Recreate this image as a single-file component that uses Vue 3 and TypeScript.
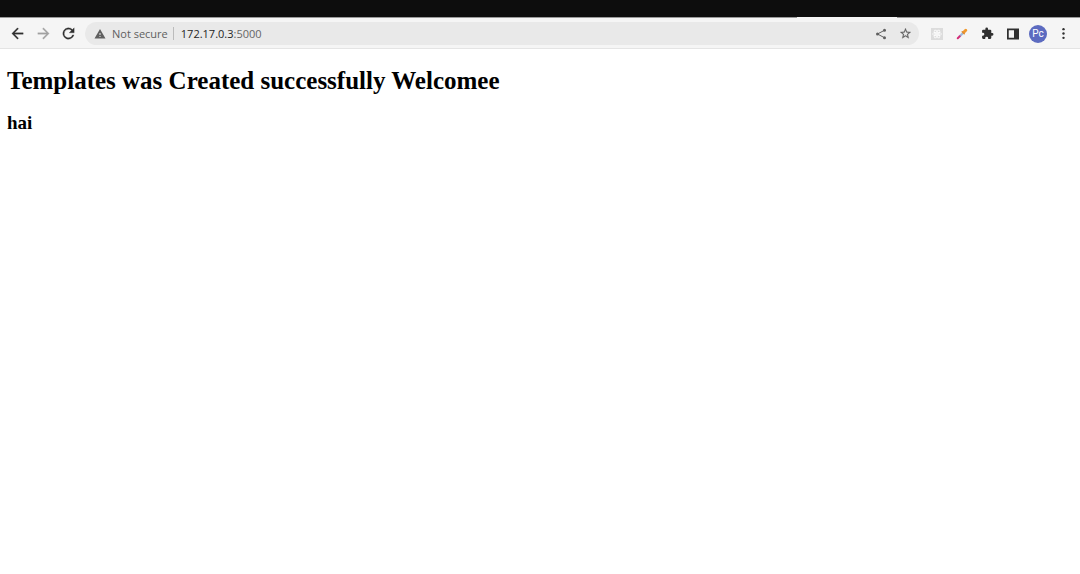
<script setup lang="ts">
import { ref } from 'vue'

const host = '172.17.0.3'
const port = ':5000'
const address = ref(host + port)
const editing = ref(false)
</script>

<template>
  <div class="browser">
    <div class="titlebar"><div class="active-tab"></div></div>
    <header class="toolbar">
      <nav class="group navigation" aria-label="Navigation">
        <button type="button" aria-label="Back">
          <svg class="icon bold" viewBox="0 0 24 24"><path d="M20 11H7.8l5.6-5.6L12 4l-8 8 8 8 1.4-1.4L7.8 13H20z" /></svg>
        </button>
        <button type="button" class="muted" aria-label="Forward">
          <svg class="icon bold" viewBox="0 0 24 24"><path d="M12 4l-1.4 1.4 5.6 5.6H4v2h12.2l-5.6 5.6L12 20l8-8z" /></svg>
        </button>
        <button type="button" aria-label="Reload">
          <svg class="icon bold" viewBox="0 0 24 24"><path d="M17.65 6.35A8 8 0 1 0 19.73 14h-2.08A6 6 0 1 1 12 6c1.66 0 3.14.69 4.22 1.78L13 11h7V4z" /></svg>
        </button>
      </nav>

      <div class="omnibox">
        <button type="button" class="security">
          <svg class="small" viewBox="0 0 24 24"><path fill-rule="evenodd" d="M1 21h22L12 2zm10-3h2v-2h-2zm0-4h2v-4h-2z" /></svg>
          <span>Not secure</span>
        </button>
        <span class="divider"></span>
        <div class="address">
          <input
            v-model="address"
            :class="{ editing }"
            type="text"
            aria-label="Address"
            spellcheck="false"
            @focus="editing = true"
            @blur="editing = false"
          />
          <span v-if="!editing && address === host + port" class="formatted" aria-hidden="true">{{ host }}<span class="port">{{ port }}</span></span>
        </div>
        <button type="button" class="page-action" aria-label="Share">
          <svg class="small" viewBox="0 0 24 24"><path d="M19 4.5 5 12l14 7.5" fill="none" stroke="currentColor" stroke-width="2" /><circle cx="19" cy="4.5" r="3" /><circle cx="5" cy="12" r="3" /><circle cx="19" cy="19.5" r="3" /></svg>
        </button>
        <button type="button" class="page-action" aria-label="Bookmark">
          <svg class="medium bold" viewBox="0 0 24 24"><path d="M22 9.24l-7.19-.62L12 2 9.19 8.63 2 9.24l5.46 4.73L5.82 21 12 17.27 18.18 21l-1.63-7.03zM12 15.4l-3.76 2.27 1-4.28-3.32-2.88 4.38-.38L12 6.1l1.71 4.04 4.38.38-3.32 2.88 1 4.28z" /></svg>
        </button>
      </div>

      <div class="group extensions">
        <button type="button" aria-label="React Developer Tools">
          <svg class="small" viewBox="0 0 24 24">
            <path fill="#dcdcdc" d="M0 0h24v24H0z" />
            <g fill="none" stroke="#fff" stroke-width="1.4">
              <ellipse cx="12" cy="12" rx="9" ry="3.5" />
              <ellipse cx="12" cy="12" rx="9" ry="3.5" transform="rotate(60 12 12)" />
              <ellipse cx="12" cy="12" rx="9" ry="3.5" transform="rotate(120 12 12)" />
            </g>
            <circle cx="12" cy="12" r="2" fill="#fff" />
          </svg>
        </button>
        <button type="button" aria-label="Color picker">
          <svg class="small" viewBox="0 0 24 24">
            <path d="M7 17l7-7" stroke="#9bb8dc" stroke-width="4.5" />
            <path d="M3.5 20.5l4-4" stroke="#d32a76" stroke-width="4" stroke-linecap="round" />
            <path d="M15.5 8.5l4-4" stroke="#f0982c" stroke-width="6" stroke-linecap="round" />
            <path d="M12.5 7.5l4 4" stroke="#dd8b35" stroke-width="3" stroke-linecap="round" />
          </svg>
        </button>
        <button type="button" aria-label="Extensions">
          <svg class="medium" viewBox="0 0 24 24"><path d="M20.5 11H19V7a2 2 0 0 0-2-2h-4V3.5a2.5 2.5 0 0 0-5 0V5H4a2 2 0 0 0-2 2v3.8h1.5a2.7 2.7 0 0 1 0 5.4H2V20a2 2 0 0 0 2 2h3.8v-1.5a2.7 2.7 0 0 1 5.4 0V22H17a2 2 0 0 0 2-2v-4h1.5a2.5 2.5 0 0 0 0-5z" /></svg>
        </button>
        <button type="button" aria-label="Side panel">
          <svg class="small" viewBox="0 0 24 24"><path fill-rule="evenodd" d="M0 1h24v22H0zm3.5 3.5v15H14v-15z" /></svg>
        </button>
        <button type="button" aria-label="Profile"><span class="avatar">Pc</span></button>
        <button type="button" aria-label="Menu">
          <svg class="medium" viewBox="0 0 24 24"><circle cx="12" cy="4" r="2.2" /><circle cx="12" cy="12" r="2.2" /><circle cx="12" cy="20" r="2.2" /></svg>
        </button>
      </div>
    </header>

    <main class="page">
      <h1>Templates was Created successfully Welcomee</h1>
      <h3>hai</h3>
    </main>
  </div>
</template>

<style>
body {
  margin: 0;
  background: #fff;
}
</style>

<style scoped>
.browser {
  min-height: 100vh;
  background: #fff;
}

.titlebar {
  display: flex;
  align-items: flex-end;
  justify-content: flex-end;
  box-sizing: border-box;
  height: 18px;
  padding-right: 183px;
  background: linear-gradient(#0d0d0d 17px, #999 17px);
}

.active-tab {
  width: 100px;
  height: 1px;
  background: #f5f5f5;
}

.toolbar {
  display: flex;
  align-items: center;
  box-sizing: border-box;
  height: 31px;
  padding: 1px 4px 0 5px;
  border-bottom: 1px solid #e4e4e4;
  background: #f5f5f5;
  font-family: "Open Sans", "Noto Sans", sans-serif;
  font-size: 11px;
}

button {
  display: flex;
  align-items: center;
  justify-content: center;
  flex: none;
  width: 25px;
  height: 23px;
  padding: 0;
  border: 0;
  background: none;
  color: #303030;
  font: inherit;
}

svg {
  display: block;
  fill: currentColor;
}

.icon {
  width: 17px;
  height: 17px;
}

.medium {
  width: 13px;
  height: 13px;
}

.small {
  width: 12px;
  height: 12px;
}

.bold {
  stroke: currentColor;
  stroke-width: 0.4;
}

.group {
  display: flex;
  justify-content: space-between;
}

.navigation {
  width: 76px;
}

.extensions {
  width: 152px;
}

.muted {
  color: #a2a2a2;
}

.omnibox {
  display: flex;
  align-items: center;
  flex: 1;
  height: 23px;
  margin: 0 5px 0 4px;
  padding: 0 1px 0 9px;
  border-radius: 12px;
  background: #e9e9e9;
}

.security {
  gap: 6px;
  width: auto;
  color: #606060;
}

.divider {
  width: 1px;
  height: 13px;
  margin: 0 7px 0 5px;
  background: #bbb;
}

.address {
  position: relative;
  flex: 1;
}

input {
  display: block;
  box-sizing: border-box;
  width: 100%;
  height: 20px;
  padding: 0;
  border: 0;
  outline: 0;
  background: none;
  color: transparent;
  font: inherit;
}

input.editing {
  color: #252525;
}

.formatted {
  position: absolute;
  inset: 0;
  color: #252525;
  line-height: 20px;
  pointer-events: none;
}

.port {
  color: #666;
}

.page-action {
  color: #606060;
}

.avatar {
  width: 18px;
  height: 18px;
  border-radius: 50%;
  background: #5c6bc0;
  color: #fff;
  font-family: Roboto, sans-serif;
  font-size: 10px;
  line-height: 18px;
  text-align: center;
}

.page {
  padding: 17px 7px;
  color: #000;
  font-family: "Liberation Serif", "Times New Roman", serif;
}

h1 {
  margin: 0 0 15px;
  font-size: 25px;
  line-height: 30px;
}

h3 {
  margin: 0;
  font-size: 19px;
  line-height: 24px;
}
</style>
